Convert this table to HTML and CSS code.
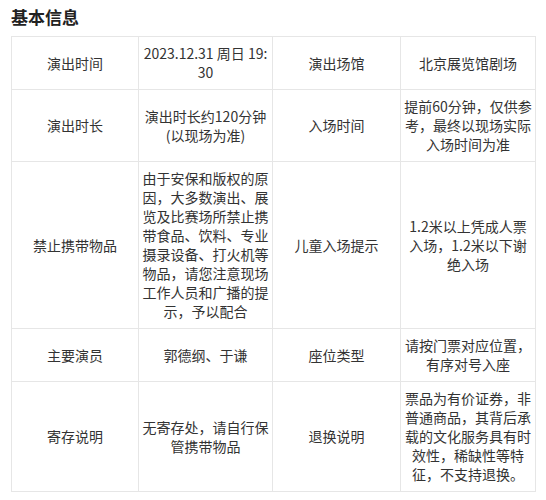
FILE: index.html
```html
<!DOCTYPE html>
<html lang="zh-CN">
<head>
<meta charset="utf-8">
<link rel="stylesheet" href="styles.css">
</head>
<body>
<h2 class="title">基本信息</h2>
<table class="info">
  <colgroup>
    <col class="c1"><col class="c2"><col class="c3"><col class="c4">
  </colgroup>
  <tr>
    <td>演出时间</td>
    <td class="breakall">2023.12.31 周日 19:30</td>
    <td>演出场馆</td>
    <td>北京展览馆剧场</td>
  </tr>
  <tr>
    <td>演出时长</td>
    <td>演出时长约120分钟(以现场为准)</td>
    <td>入场时间</td>
    <td>提前60分钟，仅供参考，最终以现场实际入场时间为准</td>
  </tr>
  <tr>
    <td>禁止携带物品</td>
    <td>由于安保和版权的原因，大多数演出、展览及比赛场所禁止携带食品、饮料、专业摄录设备、打火机等物品，请您注意现场工作人员和广播的提示，予以配合</td>
    <td>儿童入场提示</td>
    <td>1.2米以上凭成人票入场，1.2米以下谢绝入场</td>
  </tr>
  <tr>
    <td>主要演员</td>
    <td>郭德纲、于谦</td>
    <td>座位类型</td>
    <td>请按门票对应位置，有序对号入座</td>
  </tr>
  <tr>
    <td>寄存说明</td>
    <td>无寄存处，请自行保管携带物品</td>
    <td>退换说明</td>
    <td>票品为有价证券，非普通商品，其背后承载的文化服务具有时效性，稀缺性等特征，不支持退换。</td>
  </tr>
</table>
</body>
</html>
```
FILE: styles.css
```css
html, body {
  margin: 0;
  padding: 0;
  background: #ffffff;
}
body {
  font-family: "Noto Sans CJK SC", "Noto Sans", sans-serif;
  color: #333333;
}
.title {
  margin: 0 0 9px 11px;
  padding-top: 7px;
  font-size: 17px;
  line-height: 20px;
  font-weight: 700;
  color: #222222;
}
.info {
  margin-left: 11px;
  width: 524px;
  table-layout: fixed;
  border-collapse: collapse;
}
.c1 { width: 127px; }
.c2 { width: 134px; }
.c3 { width: 128px; }
.c4 { width: 135px; }
.info td {
  border: 1px solid #e6e6e6;
  padding: 7px 3px;
  font-size: 14px;
  line-height: 19px;
  text-align: center;
  vertical-align: middle;
  color: #333333;
}
.breakall {
  word-break: break-all;
}
```
